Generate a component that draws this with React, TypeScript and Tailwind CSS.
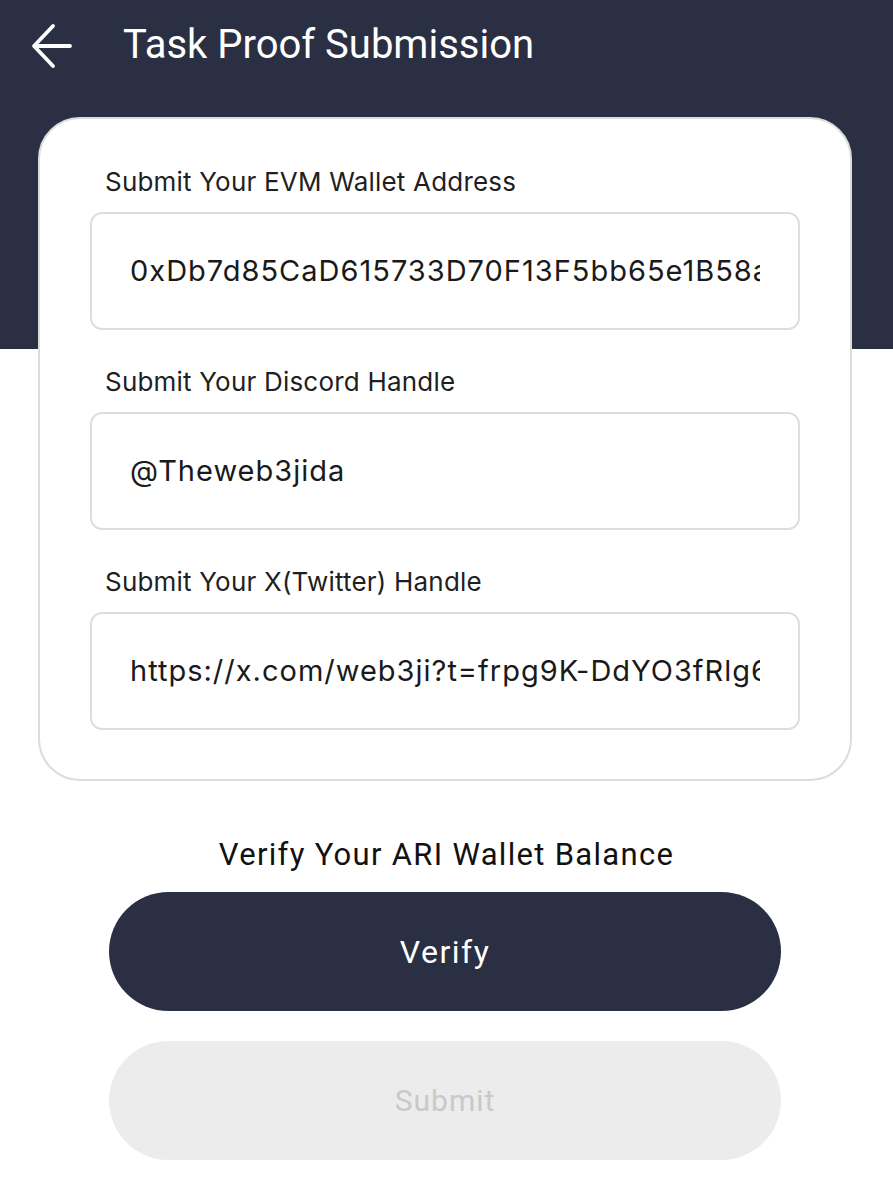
import React from "react";

function Field({ label, value }: { label: string; value: string }) {
  return (
    <div className="flex flex-col">
      <div className="pl-[15px] text-[26px] leading-[30px] tracking-[0.2px] text-[#1f1f1f] font-['Inter',sans-serif]">{label}</div>
      <div className="mt-[15px] h-[118px] rounded-[12px] border-2 border-[#dedede] bg-white flex items-center pl-[38px] pr-[38px] overflow-hidden">
        <div className="whitespace-nowrap overflow-hidden text-[29px] tracking-[1px] text-[#1a1a1a] font-['Inter',sans-serif]">{value}</div>
      </div>
    </div>
  );
}

export default function App() {
  return (
    <div className="w-[893px] min-h-[1200px] bg-white bg-[linear-gradient(to_bottom,#2a2f43_349px,#ffffff_349px)] font-['Roboto',sans-serif]">
      <div className="h-[90px] flex items-center">
        <svg className="ml-[31px]" width="44" height="48" viewBox="0 0 44 48" fill="none">
          <path d="M39 25H4M22 5L3 25L22 45" stroke="white" strokeWidth="3.8" strokeLinecap="round" strokeLinejoin="round" />
        </svg>
        <div className="ml-[48px] text-white text-[40px] font-['Roboto',sans-serif]">Task Proof Submission</div>
      </div>
      <div className="ml-[38px] mr-[41px] mt-[27px] rounded-[42px] border-2 border-[#dcdcdc] bg-white px-[50px] pt-[48px] pb-[49px] flex flex-col gap-[37px]">
        <Field label="Submit Your EVM Wallet Address" value="0xDb7d85CaD615733D70F13F5bb65e1B58a9c2F4e1" />
        <Field label="Submit Your Discord Handle" value="@Theweb3jida" />
        <Field label="Submit Your X(Twitter) Handle" value="https://x.com/web3ji?t=frpg9K-DdYO3fRlg6Qw&s=09" />
      </div>
      <div className="mt-[55px] text-center text-[31px] leading-[38px] tracking-[1.3px] text-[#111111]">Verify Your ARI Wallet Balance</div>
      <div className="ml-[109px] mr-[112px] mt-[18px] flex flex-col gap-[30px]">
        <button className="h-[119px] rounded-full bg-[#2a2f43] text-white text-[32px] tracking-[1.5px]">Verify</button>
        <button className="h-[119px] rounded-full bg-[#ececec] text-[#c9c9c9] text-[30px] tracking-[1px]">Submit</button>
      </div>
    </div>
  );
}
